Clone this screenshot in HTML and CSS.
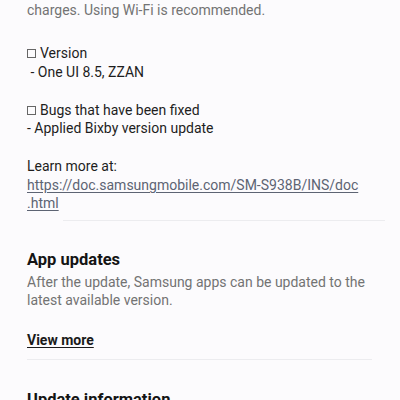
FILE: index.html
```html
<!DOCTYPE html>
<html>
<head>
<meta charset="utf-8">
<link rel="stylesheet" href="styles.css">
</head>
<body>
<div class="page">
  <section class="notes">
    <p class="muted lead">charges. Using Wi-Fi is recommended.</p>
    <div class="body">
      <div class="line"><span class="box"></span>Version</div>
      <div class="line">&nbsp;- One UI 8.5, ZZAN</div>
      <div class="line blank">&nbsp;</div>
      <div class="line"><span class="box"></span>Bugs that have been fixed</div>
      <div class="line">- Applied Bixby version update</div>
      <div class="line blank">&nbsp;</div>
      <div class="line">Learn more at:</div>
      <div class="line linkline"><a class="link" href="#">https://doc.samsungmobile.com/SM-S938B/INS/doc<br>.html</a></div>
    </div>
  </section>
  <hr class="divider inset">
  <section class="block">
    <h2 class="title">App updates</h2>
    <p class="muted desc">After the update, Samsung apps can be updated to the latest available version.</p>
    <a class="more" href="#">View more</a>
  </section>
  <hr class="divider short">
  <section class="block last">
    <h2 class="title">Update information</h2>
  </section>
</div>
</body>
</html>
```
FILE: styles.css
```css
html, body {
  margin: 0;
  padding: 0;
  background: #fcfbfd;
}
body {
  font-family: Roboto, "Noto Sans", sans-serif;
  font-size: 14px;
  color: #1e1e1e;
  width: 400px;
  height: 400px;
  overflow: hidden;
}
.page {
  padding: 0 15px 0 27px;
  margin-top: 0.5px;
}
p { margin: 0; }
.muted { color: #737373; }
.lead { line-height: 18.75px; }
.body {
  margin-top: 25px;
  line-height: 18.75px;
}
.box {
  display: inline-block;
  width: 7px;
  height: 7px;
  border: 1px solid #666;
  margin-right: 4px;
  vertical-align: 0px;
}
.linkline { line-height: 18px; margin-top: 0.5px; }
.link {
  color: #5d6473;
  text-decoration: underline;
  text-underline-offset: 2px;
}
.divider {
  border: 0;
  height: 1px;
  background: #ececef;
  margin: 8px 0 0 0;
}
.divider.inset { margin-left: 36px; margin-right: 0; }
.divider.short { margin-right: 13px; margin-top: 10px; }
.block { padding-top: 28px; }
.block.last { padding-top: 29px; }
.title {
  margin: 0;
  font-size: 16.5px;
  font-weight: 700;
  line-height: 22px;
  color: #141414;
}
.desc {
  line-height: 18px;
  margin-top: 2px;
}
.more {
  display: inline-block;
  margin-top: 21.5px;
  font-weight: 700;
  color: #1a1a1a;
  text-decoration: underline;
  text-underline-offset: 2px;
  line-height: 18px;
}
```
